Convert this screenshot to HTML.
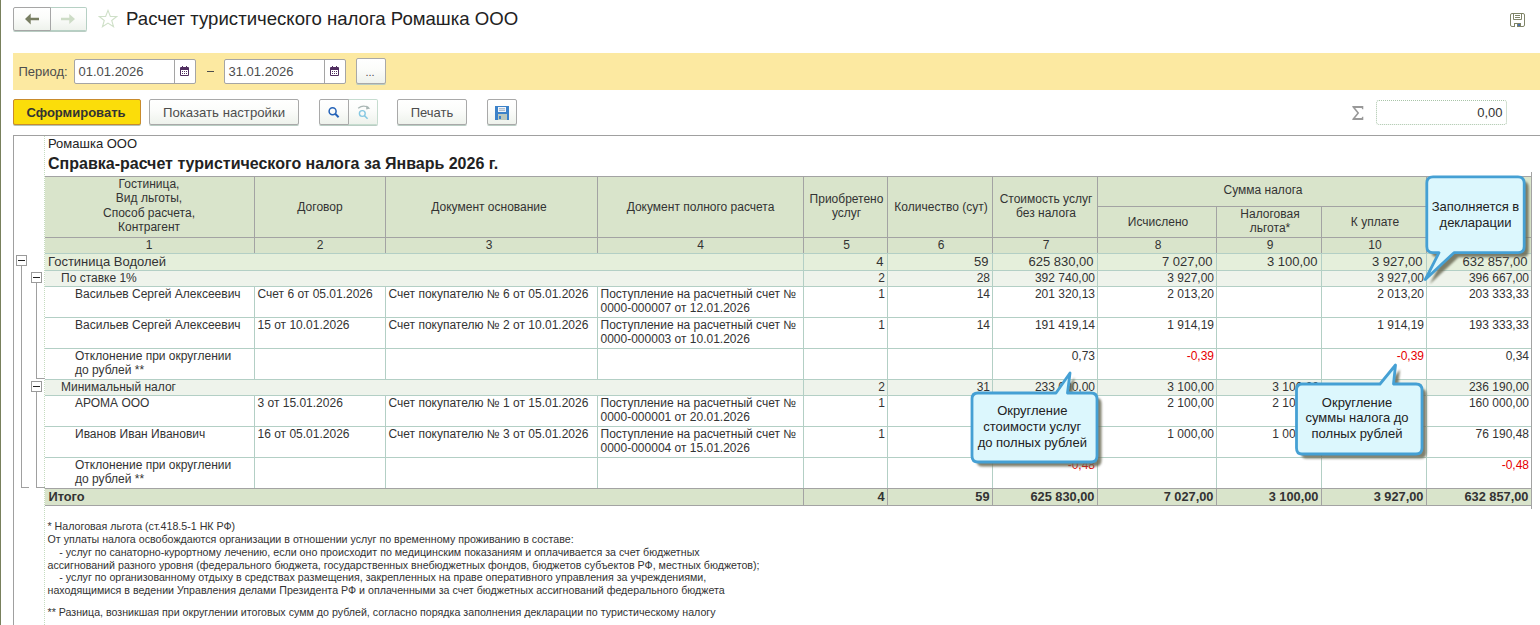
<!DOCTYPE html><html><head><meta charset="utf-8"><style>
html,body{margin:0;padding:0;background:#fff;width:1540px;height:625px;overflow:hidden;position:relative;font-family:"Liberation Sans", sans-serif}
.t{position:absolute;white-space:nowrap;font-family:"Liberation Sans", sans-serif}
.btn{position:absolute;box-sizing:border-box;border:1px solid #a9a9a9;border-radius:2px;background:linear-gradient(#ffffff 0%,#fbfcfa 45%,#eef2ec 100%);box-shadow:0 1px 0 #b9cdc3}
</style></head><body>
<div style="position:absolute;left:0px;top:0px;width:1px;height:625px;background:#78805c"></div>
<div class="btn" style="left:13px;top:7px;width:38px;height:24px;border-color:#a6a6a6;border-radius:2px 0 0 2px"></div>
<div class="btn" style="left:50px;top:7px;width:37px;height:24px;border-color:#b6d0c4;border-left-color:#a6a6a6;border-radius:0 2px 2px 0"></div>
<svg style="position:absolute;left:24px;top:13.4px" width="16" height="12" viewBox="0 0 16 12"><path d="M1 6 L6.7 0.6 L6.7 4.7 L15 4.7 L15 7.3 L6.7 7.3 L6.7 11.4 Z" fill="#787e62"/></svg>
<svg style="position:absolute;left:60px;top:13.4px" width="16" height="12" viewBox="0 0 16 12"><path d="M15 6 L9.3 0.9 L9.3 4.7 L1 4.7 L1 7.3 L9.3 7.3 L9.3 11.1 Z" fill="#cddcc6"/></svg>
<svg style="position:absolute;left:98px;top:9px" width="20" height="20" viewBox="0 0 22 22"><path d="M11 1.5 L13.6 8.1 L20.6 8.3 L15.1 12.6 L17.1 19.5 L11 15.5 L4.9 19.5 L6.9 12.6 L1.4 8.3 L8.4 8.1 Z" fill="none" stroke="#cfe0c8" stroke-width="1.2"/></svg>
<div class="t" style="left:126px;top:7.76px;font-size:18.6px;line-height:22px;font-weight:400;color:#222;">Расчет туристического налога Ромашка ООО</div>
<svg style="position:absolute;left:1510px;top:13px" width="15" height="14" viewBox="0 0 15 14"><rect x="0.5" y="0.5" width="14" height="13" rx="1.5" fill="none" stroke="#7f8468" stroke-width="1"/><path d="M3.5 0.5 V6.5 H11.5 V0.5" fill="none" stroke="#7f8468"/><path d="M5 2.5 H10 M5 4.5 H10" stroke="#7f8468"/><rect x="4" y="10" width="7" height="4" fill="#7f8468"/><rect x="5" y="11" width="2" height="3" fill="#fff"/><rect x="8" y="11" width="2" height="2" fill="#4a6fb0"/></svg>
<div style="position:absolute;left:13px;top:53px;width:1527px;height:37px;background:#fce9a1"></div>
<div class="t" style="left:18.5px;top:63.50px;font-size:13px;line-height:16px;font-weight:400;color:#4d4d4d;">Период:</div>
<div style="position:absolute;left:74px;top:59px;width:122px;height:25px;box-sizing:border-box;border:1px solid #a5a5a5;border-radius:2px;background:#fff"></div>
<div style="position:absolute;left:174px;top:60px;width:1px;height:23px;background:#a5a5a5"></div>
<div class="t" style="left:78.5px;top:63.50px;font-size:13px;line-height:16px;font-weight:400;color:#4d4d4d;">01.01.2026</div>
<svg style="position:absolute;left:180px;top:66px" width="9" height="10" viewBox="0 0 9 10"><rect x="0" y="1" width="9" height="9" rx="1" fill="#512e60"/><rect x="1" y="4" width="7" height="5" fill="#fff"/><rect x="2" y="0" width="1" height="2" fill="#512e60"/><rect x="6" y="0" width="1" height="2" fill="#512e60"/><g fill="#512e60"><rect x="2" y="5" width="1" height="1"/><rect x="4" y="5" width="1" height="1"/><rect x="6" y="5" width="1" height="1"/><rect x="2" y="7" width="1" height="1"/><rect x="4" y="7" width="1" height="1"/><rect x="6" y="7" width="1" height="1"/></g></svg>
<div style="position:absolute;left:207px;top:71px;width:7px;height:1px;background:#4d4d4d"></div>
<div style="position:absolute;left:224px;top:59px;width:122px;height:25px;box-sizing:border-box;border:1px solid #a5a5a5;border-radius:2px;background:#fff"></div>
<div style="position:absolute;left:324px;top:60px;width:1px;height:23px;background:#a5a5a5"></div>
<div class="t" style="left:228.5px;top:63.50px;font-size:13px;line-height:16px;font-weight:400;color:#4d4d4d;">31.01.2026</div>
<svg style="position:absolute;left:330px;top:66px" width="9" height="10" viewBox="0 0 9 10"><rect x="0" y="1" width="9" height="9" rx="1" fill="#512e60"/><rect x="1" y="4" width="7" height="5" fill="#fff"/><rect x="2" y="0" width="1" height="2" fill="#512e60"/><rect x="6" y="0" width="1" height="2" fill="#512e60"/><g fill="#512e60"><rect x="2" y="5" width="1" height="1"/><rect x="4" y="5" width="1" height="1"/><rect x="6" y="5" width="1" height="1"/><rect x="2" y="7" width="1" height="1"/><rect x="4" y="7" width="1" height="1"/><rect x="6" y="7" width="1" height="1"/></g></svg>
<div class="btn" style="left:356px;top:58px;width:30px;height:26px"></div>
<div class="t" style="left:170px;width:400px;text-align:center;top:65.69px;font-size:11px;line-height:13px;font-weight:400;color:#4d4d4d;">...</div>
<div style="position:absolute;left:13px;top:99px;width:128px;height:26px;box-sizing:border-box;border:1px solid #c98b2c;border-radius:2px;background:#fbdd0a;box-shadow:0 1px 0 #b3c5b7"></div>
<div class="t" style="left:-124px;width:400px;text-align:center;top:105.00px;font-size:13px;line-height:16px;font-weight:700;color:#333;">Сформировать</div>
<div class="btn" style="left:149px;top:99px;width:150px;height:26px"></div>
<div class="t" style="left:24px;width:400px;text-align:center;top:105.23px;font-size:13.2px;line-height:16px;font-weight:400;color:#4d4d4d;">Показать настройки</div>
<div class="btn" style="left:319px;top:99px;width:30px;height:26px;border-radius:2px 0 0 2px"></div>
<div class="btn" style="left:348px;top:99px;width:30px;height:26px;border-color:#c6dccf;border-left-color:#a9a9a9;border-radius:0 2px 2px 0"></div>
<svg style="position:absolute;left:325px;top:103px" width="16" height="18" viewBox="0 0 16 18"><circle cx="7.6" cy="8.2" r="3.5" fill="none" stroke="#2563b8" stroke-width="1.5"/><line x1="10.2" y1="10.8" x2="13.6" y2="14.2" stroke="#2563b8" stroke-width="2"/></svg>
<svg style="position:absolute;left:355px;top:102px" width="18" height="18" viewBox="0 0 18 18"><circle cx="7.3" cy="11.5" r="2.9" fill="none" stroke="#86c8e2" stroke-width="1.4"/><line x1="9.5" y1="13.7" x2="12.6" y2="16.8" stroke="#86c8e2" stroke-width="1.6"/><path d="M3.2 6.3 Q8 2.4 13.6 5.6" fill="none" stroke="#a9b6b4" stroke-width="1.3"/><path d="M11.3 3.6 L15.2 6.6 L11.2 7.4 Z" fill="#a9b6b4"/></svg>
<div class="btn" style="left:397px;top:99px;width:70px;height:26px"></div>
<div class="t" style="left:232px;width:400px;text-align:center;top:105.30px;font-size:13px;line-height:16px;font-weight:400;color:#4d4d4d;">Печать</div>
<div class="btn" style="left:487px;top:99px;width:30px;height:26px"></div>
<svg style="position:absolute;left:495px;top:106px" width="14" height="14" viewBox="0 0 14 14"><rect x="0" y="0" width="14" height="14" fill="#3b82c9"/><rect x="3" y="1" width="8" height="5" fill="#f2f6fa"/><line x1="4" y1="2.7" x2="10" y2="2.7" stroke="#8aa0b8" stroke-width="0.8"/><line x1="4" y1="4.3" x2="10" y2="4.3" stroke="#8aa0b8" stroke-width="0.8"/><rect x="3" y="8" width="9" height="6" fill="#b9c7bd"/><rect x="4" y="10" width="2" height="3" fill="#3b82c9"/></svg>
<svg style="position:absolute;left:1352px;top:106px" width="12" height="14" viewBox="0 0 12 14"><path d="M0.3 0 H11.3 V3.2 H10.3 L9.6 1.9 H3.2 L7.2 7 L3.2 12.1 H9.6 L10.3 10.8 H11.3 V14 H0.3 V12.9 L5.2 7 L0.3 1.1 Z" fill="#999"/></svg>
<div style="position:absolute;left:1376px;top:100px;width:131px;height:25px;box-sizing:border-box;border:1px dotted #a8c4a8;border-radius:3px;background:#fff"></div>
<div class="t" style="right:37.5px;top:104.80px;font-size:13px;line-height:16px;font-weight:400;color:#333;text-align:right;">0,00</div>
<div style="position:absolute;left:13px;top:135px;width:1527px;height:1px;background:#a0a0a0"></div>
<div style="position:absolute;left:13px;top:135px;width:1px;height:490px;background:#a0a0a0"></div>
<div style="position:absolute;left:44px;top:136px;width:0;height:489px;border-left:1px dotted #c5dcc0"></div>
<div class="t" style="left:48px;top:135.50px;font-size:13px;line-height:16px;font-weight:400;color:#222;">Ромашка ООО</div>
<div class="t" style="left:48px;top:153.56px;font-size:16px;line-height:19px;font-weight:700;color:#222;">Справка-расчет туристического налога за Январь 2026 г.</div>
<div style="position:absolute;left:45px;top:176px;width:1486px;height:77px;background:#d9e4cb"></div>
<div style="position:absolute;left:45px;top:176px;width:1487px;height:1px;background:#a3a3a3"></div>
<div style="position:absolute;left:1097px;top:206px;width:330px;height:1px;background:#a3a3a3"></div>
<div style="position:absolute;left:45px;top:237px;width:1487px;height:1px;background:#a3a3a3"></div>
<div style="position:absolute;left:254px;top:176px;width:1px;height:78px;background:#a3a3a3"></div>
<div style="position:absolute;left:385px;top:176px;width:1px;height:78px;background:#a3a3a3"></div>
<div style="position:absolute;left:597px;top:176px;width:1px;height:78px;background:#a3a3a3"></div>
<div style="position:absolute;left:803px;top:176px;width:1px;height:78px;background:#a3a3a3"></div>
<div style="position:absolute;left:887px;top:176px;width:1px;height:78px;background:#a3a3a3"></div>
<div style="position:absolute;left:992px;top:176px;width:1px;height:78px;background:#a3a3a3"></div>
<div style="position:absolute;left:1097px;top:176px;width:1px;height:78px;background:#a3a3a3"></div>
<div style="position:absolute;left:1216px;top:206px;width:1px;height:48px;background:#a3a3a3"></div>
<div style="position:absolute;left:1321px;top:206px;width:1px;height:48px;background:#a3a3a3"></div>
<div style="position:absolute;left:1426px;top:176px;width:1px;height:78px;background:#a3a3a3"></div>
<div style="position:absolute;left:1531px;top:176px;width:1px;height:78px;background:#a3a3a3"></div>
<div style="position:absolute;left:1531px;top:172px;width:1px;height:337px;background:#a3a3a3"></div>
<div class="t" style="left:-51.0px;width:400px;text-align:center;top:176.54px;font-size:12px;line-height:14px;font-weight:400;color:#333;">Гостиница,</div>
<div class="t" style="left:-51.0px;width:400px;text-align:center;top:191.09px;font-size:12px;line-height:14px;font-weight:400;color:#333;">Вид льготы,</div>
<div class="t" style="left:-51.0px;width:400px;text-align:center;top:205.64px;font-size:12px;line-height:14px;font-weight:400;color:#333;">Способ расчета,</div>
<div class="t" style="left:-51.0px;width:400px;text-align:center;top:220.19px;font-size:12px;line-height:14px;font-weight:400;color:#333;">Контрагент</div>
<div class="t" style="left:120.0px;width:400px;text-align:center;top:200.34px;font-size:12px;line-height:14px;font-weight:400;color:#333;">Договор</div>
<div class="t" style="left:289.0px;width:400px;text-align:center;top:200.34px;font-size:12px;line-height:14px;font-weight:400;color:#333;">Документ основание</div>
<div class="t" style="left:500.5px;width:400px;text-align:center;top:200.34px;font-size:12px;line-height:14px;font-weight:400;color:#333;">Документ полного расчета</div>
<div class="t" style="left:646.5px;width:400px;text-align:center;top:192.34px;font-size:12px;line-height:14px;font-weight:400;color:#333;">Приобретено</div>
<div class="t" style="left:646.5px;width:400px;text-align:center;top:205.64px;font-size:12px;line-height:14px;font-weight:400;color:#333;">услуг</div>
<div class="t" style="left:741.0px;width:400px;text-align:center;top:200.34px;font-size:12px;line-height:14px;font-weight:400;color:#333;">Количество (сут)</div>
<div class="t" style="left:846.0px;width:400px;text-align:center;top:192.34px;font-size:12px;line-height:14px;font-weight:400;color:#333;">Стоимость услуг</div>
<div class="t" style="left:846.0px;width:400px;text-align:center;top:205.64px;font-size:12px;line-height:14px;font-weight:400;color:#333;">без налога</div>
<div class="t" style="left:1063.0px;width:400px;text-align:center;top:183.44px;font-size:12px;line-height:14px;font-weight:400;color:#333;">Сумма налога</div>
<div class="t" style="left:958.0px;width:400px;text-align:center;top:214.64px;font-size:12px;line-height:14px;font-weight:400;color:#333;">Исчислено</div>
<div class="t" style="left:1070.0px;width:400px;text-align:center;top:207.44px;font-size:12px;line-height:14px;font-weight:400;color:#333;">Налоговая</div>
<div class="t" style="left:1070.0px;width:400px;text-align:center;top:220.74px;font-size:12px;line-height:14px;font-weight:400;color:#333;">льгота*</div>
<div class="t" style="left:1175.0px;width:400px;text-align:center;top:214.64px;font-size:12px;line-height:14px;font-weight:400;color:#333;">К уплате</div>
<div class="t" style="left:-51.0px;width:400px;text-align:center;top:238.14px;font-size:12px;line-height:14px;font-weight:400;color:#333;">1</div>
<div class="t" style="left:120.0px;width:400px;text-align:center;top:238.14px;font-size:12px;line-height:14px;font-weight:400;color:#333;">2</div>
<div class="t" style="left:289.0px;width:400px;text-align:center;top:238.14px;font-size:12px;line-height:14px;font-weight:400;color:#333;">3</div>
<div class="t" style="left:500.5px;width:400px;text-align:center;top:238.14px;font-size:12px;line-height:14px;font-weight:400;color:#333;">4</div>
<div class="t" style="left:646.5px;width:400px;text-align:center;top:238.14px;font-size:12px;line-height:14px;font-weight:400;color:#333;">5</div>
<div class="t" style="left:741.0px;width:400px;text-align:center;top:238.14px;font-size:12px;line-height:14px;font-weight:400;color:#333;">6</div>
<div class="t" style="left:846.0px;width:400px;text-align:center;top:238.14px;font-size:12px;line-height:14px;font-weight:400;color:#333;">7</div>
<div class="t" style="left:958.0px;width:400px;text-align:center;top:238.14px;font-size:12px;line-height:14px;font-weight:400;color:#333;">8</div>
<div class="t" style="left:1070.0px;width:400px;text-align:center;top:238.14px;font-size:12px;line-height:14px;font-weight:400;color:#333;">9</div>
<div class="t" style="left:1175.0px;width:400px;text-align:center;top:238.14px;font-size:12px;line-height:14px;font-weight:400;color:#333;">10</div>
<div class="t" style="left:1280.0px;width:400px;text-align:center;top:238.14px;font-size:12px;line-height:14px;font-weight:400;color:#333;">11</div>
<div style="position:absolute;left:45px;top:254px;width:1486px;height:16px;background:#e5efdb"></div>
<div style="position:absolute;left:803px;top:253px;width:1px;height:18px;background:#b3cfc5"></div>
<div style="position:absolute;left:887px;top:253px;width:1px;height:18px;background:#b3cfc5"></div>
<div style="position:absolute;left:992px;top:253px;width:1px;height:18px;background:#b3cfc5"></div>
<div style="position:absolute;left:1097px;top:253px;width:1px;height:18px;background:#b3cfc5"></div>
<div style="position:absolute;left:1216px;top:253px;width:1px;height:18px;background:#b3cfc5"></div>
<div style="position:absolute;left:1321px;top:253px;width:1px;height:18px;background:#b3cfc5"></div>
<div style="position:absolute;left:1426px;top:253px;width:1px;height:18px;background:#b3cfc5"></div>
<div style="position:absolute;left:45px;top:270px;width:1486px;height:1px;background:#b3cfc5"></div>
<div class="t" style="left:48px;top:253.70px;font-size:13px;line-height:16px;font-weight:400;color:#333;">Гостиница Водолей</div>
<div class="t" style="right:656.5px;top:253.70px;font-size:13px;line-height:16px;font-weight:400;color:#333;text-align:right;">4</div>
<div class="t" style="right:551.5px;top:253.70px;font-size:13px;line-height:16px;font-weight:400;color:#333;text-align:right;">59</div>
<div class="t" style="right:446.5px;top:253.70px;font-size:13px;line-height:16px;font-weight:400;color:#333;text-align:right;">625 830,00</div>
<div class="t" style="right:327.5px;top:253.70px;font-size:13px;line-height:16px;font-weight:400;color:#333;text-align:right;">7 027,00</div>
<div class="t" style="right:222.5px;top:253.70px;font-size:13px;line-height:16px;font-weight:400;color:#333;text-align:right;">3 100,00</div>
<div class="t" style="right:117.5px;top:253.70px;font-size:13px;line-height:16px;font-weight:400;color:#333;text-align:right;">3 927,00</div>
<div class="t" style="right:12.5px;top:253.70px;font-size:13px;line-height:16px;font-weight:400;color:#333;text-align:right;">632 857,00</div>
<div style="position:absolute;left:45px;top:271px;width:1486px;height:15px;background:#eef3eb"></div>
<div style="position:absolute;left:803px;top:270px;width:1px;height:17px;background:#b3cfc5"></div>
<div style="position:absolute;left:887px;top:270px;width:1px;height:17px;background:#b3cfc5"></div>
<div style="position:absolute;left:992px;top:270px;width:1px;height:17px;background:#b3cfc5"></div>
<div style="position:absolute;left:1097px;top:270px;width:1px;height:17px;background:#b3cfc5"></div>
<div style="position:absolute;left:1216px;top:270px;width:1px;height:17px;background:#b3cfc5"></div>
<div style="position:absolute;left:1321px;top:270px;width:1px;height:17px;background:#b3cfc5"></div>
<div style="position:absolute;left:1426px;top:270px;width:1px;height:17px;background:#b3cfc5"></div>
<div style="position:absolute;left:45px;top:286px;width:1486px;height:1px;background:#b3cfc5"></div>
<div class="t" style="left:61px;top:271.14px;font-size:12px;line-height:14px;font-weight:400;color:#333;">По ставке 1%</div>
<div class="t" style="right:655px;top:271.14px;font-size:12px;line-height:14px;font-weight:400;color:#333;text-align:right;">2</div>
<div class="t" style="right:550px;top:271.14px;font-size:12px;line-height:14px;font-weight:400;color:#333;text-align:right;">28</div>
<div class="t" style="right:445px;top:271.14px;font-size:12px;line-height:14px;font-weight:400;color:#333;text-align:right;">392 740,00</div>
<div class="t" style="right:326px;top:271.14px;font-size:12px;line-height:14px;font-weight:400;color:#333;text-align:right;">3 927,00</div>
<div class="t" style="right:116px;top:271.14px;font-size:12px;line-height:14px;font-weight:400;color:#333;text-align:right;">3 927,00</div>
<div class="t" style="right:11px;top:271.14px;font-size:12px;line-height:14px;font-weight:400;color:#333;text-align:right;">396 667,00</div>
<div style="position:absolute;left:254px;top:286px;width:1px;height:32px;background:#b3cfc5"></div>
<div style="position:absolute;left:385px;top:286px;width:1px;height:32px;background:#b3cfc5"></div>
<div style="position:absolute;left:597px;top:286px;width:1px;height:32px;background:#b3cfc5"></div>
<div style="position:absolute;left:803px;top:286px;width:1px;height:32px;background:#b3cfc5"></div>
<div style="position:absolute;left:887px;top:286px;width:1px;height:32px;background:#b3cfc5"></div>
<div style="position:absolute;left:992px;top:286px;width:1px;height:32px;background:#b3cfc5"></div>
<div style="position:absolute;left:1097px;top:286px;width:1px;height:32px;background:#b3cfc5"></div>
<div style="position:absolute;left:1216px;top:286px;width:1px;height:32px;background:#b3cfc5"></div>
<div style="position:absolute;left:1321px;top:286px;width:1px;height:32px;background:#b3cfc5"></div>
<div style="position:absolute;left:1426px;top:286px;width:1px;height:32px;background:#b3cfc5"></div>
<div style="position:absolute;left:45px;top:317px;width:1486px;height:1px;background:#b3cfc5"></div>
<div class="t" style="left:75px;top:287.14px;font-size:12px;line-height:14px;font-weight:400;color:#333;">Васильев Сергей Алексеевич</div>
<div class="t" style="left:257.5px;top:287.14px;font-size:12px;line-height:14px;font-weight:400;color:#333;">Счет 6 от 05.01.2026</div>
<div class="t" style="left:388.5px;top:287.14px;font-size:12px;line-height:14px;font-weight:400;color:#333;">Счет покупателю № 6 от 05.01.2026</div>
<div class="t" style="left:600.5px;top:287.14px;font-size:12px;line-height:14px;font-weight:400;color:#333;">Поступление на расчетный счет №</div>
<div class="t" style="left:600.5px;top:301.24px;font-size:12px;line-height:14px;font-weight:400;color:#333;">0000-000007 от 12.01.2026</div>
<div class="t" style="right:655px;top:287.14px;font-size:12px;line-height:14px;font-weight:400;color:#333;text-align:right;">1</div>
<div class="t" style="right:550px;top:287.14px;font-size:12px;line-height:14px;font-weight:400;color:#333;text-align:right;">14</div>
<div class="t" style="right:445px;top:287.14px;font-size:12px;line-height:14px;font-weight:400;color:#333;text-align:right;">201 320,13</div>
<div class="t" style="right:326px;top:287.14px;font-size:12px;line-height:14px;font-weight:400;color:#333;text-align:right;">2 013,20</div>
<div class="t" style="right:116px;top:287.14px;font-size:12px;line-height:14px;font-weight:400;color:#333;text-align:right;">2 013,20</div>
<div class="t" style="right:11px;top:287.14px;font-size:12px;line-height:14px;font-weight:400;color:#333;text-align:right;">203 333,33</div>
<div style="position:absolute;left:254px;top:317px;width:1px;height:32px;background:#b3cfc5"></div>
<div style="position:absolute;left:385px;top:317px;width:1px;height:32px;background:#b3cfc5"></div>
<div style="position:absolute;left:597px;top:317px;width:1px;height:32px;background:#b3cfc5"></div>
<div style="position:absolute;left:803px;top:317px;width:1px;height:32px;background:#b3cfc5"></div>
<div style="position:absolute;left:887px;top:317px;width:1px;height:32px;background:#b3cfc5"></div>
<div style="position:absolute;left:992px;top:317px;width:1px;height:32px;background:#b3cfc5"></div>
<div style="position:absolute;left:1097px;top:317px;width:1px;height:32px;background:#b3cfc5"></div>
<div style="position:absolute;left:1216px;top:317px;width:1px;height:32px;background:#b3cfc5"></div>
<div style="position:absolute;left:1321px;top:317px;width:1px;height:32px;background:#b3cfc5"></div>
<div style="position:absolute;left:1426px;top:317px;width:1px;height:32px;background:#b3cfc5"></div>
<div style="position:absolute;left:45px;top:348px;width:1486px;height:1px;background:#b3cfc5"></div>
<div class="t" style="left:75px;top:318.14px;font-size:12px;line-height:14px;font-weight:400;color:#333;">Васильев Сергей Алексеевич</div>
<div class="t" style="left:257.5px;top:318.14px;font-size:12px;line-height:14px;font-weight:400;color:#333;">15 от 10.01.2026</div>
<div class="t" style="left:388.5px;top:318.14px;font-size:12px;line-height:14px;font-weight:400;color:#333;">Счет покупателю № 2 от 10.01.2026</div>
<div class="t" style="left:600.5px;top:318.14px;font-size:12px;line-height:14px;font-weight:400;color:#333;">Поступление на расчетный счет №</div>
<div class="t" style="left:600.5px;top:332.24px;font-size:12px;line-height:14px;font-weight:400;color:#333;">0000-000003 от 10.01.2026</div>
<div class="t" style="right:655px;top:318.14px;font-size:12px;line-height:14px;font-weight:400;color:#333;text-align:right;">1</div>
<div class="t" style="right:550px;top:318.14px;font-size:12px;line-height:14px;font-weight:400;color:#333;text-align:right;">14</div>
<div class="t" style="right:445px;top:318.14px;font-size:12px;line-height:14px;font-weight:400;color:#333;text-align:right;">191 419,14</div>
<div class="t" style="right:326px;top:318.14px;font-size:12px;line-height:14px;font-weight:400;color:#333;text-align:right;">1 914,19</div>
<div class="t" style="right:116px;top:318.14px;font-size:12px;line-height:14px;font-weight:400;color:#333;text-align:right;">1 914,19</div>
<div class="t" style="right:11px;top:318.14px;font-size:12px;line-height:14px;font-weight:400;color:#333;text-align:right;">193 333,33</div>
<div style="position:absolute;left:254px;top:348px;width:1px;height:32px;background:#b3cfc5"></div>
<div style="position:absolute;left:385px;top:348px;width:1px;height:32px;background:#b3cfc5"></div>
<div style="position:absolute;left:597px;top:348px;width:1px;height:32px;background:#b3cfc5"></div>
<div style="position:absolute;left:803px;top:348px;width:1px;height:32px;background:#b3cfc5"></div>
<div style="position:absolute;left:887px;top:348px;width:1px;height:32px;background:#b3cfc5"></div>
<div style="position:absolute;left:992px;top:348px;width:1px;height:32px;background:#b3cfc5"></div>
<div style="position:absolute;left:1097px;top:348px;width:1px;height:32px;background:#b3cfc5"></div>
<div style="position:absolute;left:1216px;top:348px;width:1px;height:32px;background:#b3cfc5"></div>
<div style="position:absolute;left:1321px;top:348px;width:1px;height:32px;background:#b3cfc5"></div>
<div style="position:absolute;left:1426px;top:348px;width:1px;height:32px;background:#b3cfc5"></div>
<div style="position:absolute;left:45px;top:379px;width:1486px;height:1px;background:#b3cfc5"></div>
<div class="t" style="left:75px;top:349.14px;font-size:12px;line-height:14px;font-weight:400;color:#333;">Отклонение при округлении</div>
<div class="t" style="left:75px;top:363.24px;font-size:12px;line-height:14px;font-weight:400;color:#333;">до рублей **</div>
<div class="t" style="right:445px;top:349.14px;font-size:12px;line-height:14px;font-weight:400;color:#333;text-align:right;">0,73</div>
<div class="t" style="right:326px;top:349.14px;font-size:12px;line-height:14px;font-weight:400;color:#e60000;text-align:right;">-0,39</div>
<div class="t" style="right:116px;top:349.14px;font-size:12px;line-height:14px;font-weight:400;color:#e60000;text-align:right;">-0,39</div>
<div class="t" style="right:11px;top:349.14px;font-size:12px;line-height:14px;font-weight:400;color:#333;text-align:right;">0,34</div>
<div style="position:absolute;left:45px;top:380px;width:1486px;height:15px;background:#eef3eb"></div>
<div style="position:absolute;left:803px;top:379px;width:1px;height:17px;background:#b3cfc5"></div>
<div style="position:absolute;left:887px;top:379px;width:1px;height:17px;background:#b3cfc5"></div>
<div style="position:absolute;left:992px;top:379px;width:1px;height:17px;background:#b3cfc5"></div>
<div style="position:absolute;left:1097px;top:379px;width:1px;height:17px;background:#b3cfc5"></div>
<div style="position:absolute;left:1216px;top:379px;width:1px;height:17px;background:#b3cfc5"></div>
<div style="position:absolute;left:1321px;top:379px;width:1px;height:17px;background:#b3cfc5"></div>
<div style="position:absolute;left:1426px;top:379px;width:1px;height:17px;background:#b3cfc5"></div>
<div style="position:absolute;left:45px;top:395px;width:1486px;height:1px;background:#b3cfc5"></div>
<div class="t" style="left:61px;top:380.14px;font-size:12px;line-height:14px;font-weight:400;color:#333;">Минимальный налог</div>
<div class="t" style="right:655px;top:380.14px;font-size:12px;line-height:14px;font-weight:400;color:#333;text-align:right;">2</div>
<div class="t" style="right:550px;top:380.14px;font-size:12px;line-height:14px;font-weight:400;color:#333;text-align:right;">31</div>
<div class="t" style="right:445px;top:380.14px;font-size:12px;line-height:14px;font-weight:400;color:#333;text-align:right;">233 090,00</div>
<div class="t" style="right:326px;top:380.14px;font-size:12px;line-height:14px;font-weight:400;color:#333;text-align:right;">3 100,00</div>
<div class="t" style="right:221px;top:380.14px;font-size:12px;line-height:14px;font-weight:400;color:#333;text-align:right;">3 100,00</div>
<div class="t" style="right:11px;top:380.14px;font-size:12px;line-height:14px;font-weight:400;color:#333;text-align:right;">236 190,00</div>
<div style="position:absolute;left:254px;top:395px;width:1px;height:32px;background:#b3cfc5"></div>
<div style="position:absolute;left:385px;top:395px;width:1px;height:32px;background:#b3cfc5"></div>
<div style="position:absolute;left:597px;top:395px;width:1px;height:32px;background:#b3cfc5"></div>
<div style="position:absolute;left:803px;top:395px;width:1px;height:32px;background:#b3cfc5"></div>
<div style="position:absolute;left:887px;top:395px;width:1px;height:32px;background:#b3cfc5"></div>
<div style="position:absolute;left:992px;top:395px;width:1px;height:32px;background:#b3cfc5"></div>
<div style="position:absolute;left:1097px;top:395px;width:1px;height:32px;background:#b3cfc5"></div>
<div style="position:absolute;left:1216px;top:395px;width:1px;height:32px;background:#b3cfc5"></div>
<div style="position:absolute;left:1321px;top:395px;width:1px;height:32px;background:#b3cfc5"></div>
<div style="position:absolute;left:1426px;top:395px;width:1px;height:32px;background:#b3cfc5"></div>
<div style="position:absolute;left:45px;top:426px;width:1486px;height:1px;background:#b3cfc5"></div>
<div class="t" style="left:75px;top:396.14px;font-size:12px;line-height:14px;font-weight:400;color:#333;">АРОМА ООО</div>
<div class="t" style="left:257.5px;top:396.14px;font-size:12px;line-height:14px;font-weight:400;color:#333;">3 от 15.01.2026</div>
<div class="t" style="left:388.5px;top:396.14px;font-size:12px;line-height:14px;font-weight:400;color:#333;">Счет покупателю № 1 от 15.01.2026</div>
<div class="t" style="left:600.5px;top:396.14px;font-size:12px;line-height:14px;font-weight:400;color:#333;">Поступление на расчетный счет №</div>
<div class="t" style="left:600.5px;top:410.24px;font-size:12px;line-height:14px;font-weight:400;color:#333;">0000-000001 от 20.01.2026</div>
<div class="t" style="right:655px;top:396.14px;font-size:12px;line-height:14px;font-weight:400;color:#333;text-align:right;">1</div>
<div class="t" style="right:550px;top:396.14px;font-size:12px;line-height:14px;font-weight:400;color:#333;text-align:right;">23</div>
<div class="t" style="right:445px;top:396.14px;font-size:12px;line-height:14px;font-weight:400;color:#333;text-align:right;">157 900,00</div>
<div class="t" style="right:326px;top:396.14px;font-size:12px;line-height:14px;font-weight:400;color:#333;text-align:right;">2 100,00</div>
<div class="t" style="right:221px;top:396.14px;font-size:12px;line-height:14px;font-weight:400;color:#333;text-align:right;">2 100,00</div>
<div class="t" style="right:11px;top:396.14px;font-size:12px;line-height:14px;font-weight:400;color:#333;text-align:right;">160 000,00</div>
<div style="position:absolute;left:254px;top:426px;width:1px;height:32px;background:#b3cfc5"></div>
<div style="position:absolute;left:385px;top:426px;width:1px;height:32px;background:#b3cfc5"></div>
<div style="position:absolute;left:597px;top:426px;width:1px;height:32px;background:#b3cfc5"></div>
<div style="position:absolute;left:803px;top:426px;width:1px;height:32px;background:#b3cfc5"></div>
<div style="position:absolute;left:887px;top:426px;width:1px;height:32px;background:#b3cfc5"></div>
<div style="position:absolute;left:992px;top:426px;width:1px;height:32px;background:#b3cfc5"></div>
<div style="position:absolute;left:1097px;top:426px;width:1px;height:32px;background:#b3cfc5"></div>
<div style="position:absolute;left:1216px;top:426px;width:1px;height:32px;background:#b3cfc5"></div>
<div style="position:absolute;left:1321px;top:426px;width:1px;height:32px;background:#b3cfc5"></div>
<div style="position:absolute;left:1426px;top:426px;width:1px;height:32px;background:#b3cfc5"></div>
<div style="position:absolute;left:45px;top:457px;width:1486px;height:1px;background:#b3cfc5"></div>
<div class="t" style="left:75px;top:427.14px;font-size:12px;line-height:14px;font-weight:400;color:#333;">Иванов Иван Иванович</div>
<div class="t" style="left:257.5px;top:427.14px;font-size:12px;line-height:14px;font-weight:400;color:#333;">16 от 05.01.2026</div>
<div class="t" style="left:388.5px;top:427.14px;font-size:12px;line-height:14px;font-weight:400;color:#333;">Счет покупателю № 3 от 05.01.2026</div>
<div class="t" style="left:600.5px;top:427.14px;font-size:12px;line-height:14px;font-weight:400;color:#333;">Поступление на расчетный счет №</div>
<div class="t" style="left:600.5px;top:441.24px;font-size:12px;line-height:14px;font-weight:400;color:#333;">0000-000004 от 15.01.2026</div>
<div class="t" style="right:655px;top:427.14px;font-size:12px;line-height:14px;font-weight:400;color:#333;text-align:right;">1</div>
<div class="t" style="right:550px;top:427.14px;font-size:12px;line-height:14px;font-weight:400;color:#333;text-align:right;">8</div>
<div class="t" style="right:445px;top:427.14px;font-size:12px;line-height:14px;font-weight:400;color:#333;text-align:right;">75 190,48</div>
<div class="t" style="right:326px;top:427.14px;font-size:12px;line-height:14px;font-weight:400;color:#333;text-align:right;">1 000,00</div>
<div class="t" style="right:221px;top:427.14px;font-size:12px;line-height:14px;font-weight:400;color:#333;text-align:right;">1 000,00</div>
<div class="t" style="right:11px;top:427.14px;font-size:12px;line-height:14px;font-weight:400;color:#333;text-align:right;">76 190,48</div>
<div style="position:absolute;left:254px;top:457px;width:1px;height:32px;background:#b3cfc5"></div>
<div style="position:absolute;left:385px;top:457px;width:1px;height:32px;background:#b3cfc5"></div>
<div style="position:absolute;left:597px;top:457px;width:1px;height:32px;background:#b3cfc5"></div>
<div style="position:absolute;left:803px;top:457px;width:1px;height:32px;background:#b3cfc5"></div>
<div style="position:absolute;left:887px;top:457px;width:1px;height:32px;background:#b3cfc5"></div>
<div style="position:absolute;left:992px;top:457px;width:1px;height:32px;background:#b3cfc5"></div>
<div style="position:absolute;left:1097px;top:457px;width:1px;height:32px;background:#b3cfc5"></div>
<div style="position:absolute;left:1216px;top:457px;width:1px;height:32px;background:#b3cfc5"></div>
<div style="position:absolute;left:1321px;top:457px;width:1px;height:32px;background:#b3cfc5"></div>
<div style="position:absolute;left:1426px;top:457px;width:1px;height:32px;background:#b3cfc5"></div>
<div style="position:absolute;left:45px;top:488px;width:1486px;height:1px;background:#b3cfc5"></div>
<div class="t" style="left:75px;top:458.14px;font-size:12px;line-height:14px;font-weight:400;color:#333;">Отклонение при округлении</div>
<div class="t" style="left:75px;top:472.24px;font-size:12px;line-height:14px;font-weight:400;color:#333;">до рублей **</div>
<div class="t" style="right:445px;top:458.14px;font-size:12px;line-height:14px;font-weight:400;color:#e60000;text-align:right;">-0,48</div>
<div class="t" style="right:11px;top:458.14px;font-size:12px;line-height:14px;font-weight:400;color:#e60000;text-align:right;">-0,48</div>
<div style="position:absolute;left:45px;top:253px;width:1486px;height:1px;background:#b3cfc5"></div>
<div style="position:absolute;left:45px;top:489px;width:1486px;height:16px;background:#d9e4cb"></div>
<div style="position:absolute;left:45px;top:488px;width:1487px;height:1px;background:#a3a3a3"></div>
<div style="position:absolute;left:45px;top:505px;width:1487px;height:1px;background:#a3a3a3"></div>
<div style="position:absolute;left:803px;top:488px;width:1px;height:18px;background:#a3a3a3"></div>
<div style="position:absolute;left:887px;top:488px;width:1px;height:18px;background:#a3a3a3"></div>
<div style="position:absolute;left:992px;top:488px;width:1px;height:18px;background:#a3a3a3"></div>
<div style="position:absolute;left:1097px;top:488px;width:1px;height:18px;background:#a3a3a3"></div>
<div style="position:absolute;left:1216px;top:488px;width:1px;height:18px;background:#a3a3a3"></div>
<div style="position:absolute;left:1321px;top:488px;width:1px;height:18px;background:#a3a3a3"></div>
<div style="position:absolute;left:1426px;top:488px;width:1px;height:18px;background:#a3a3a3"></div>
<div class="t" style="left:48.5px;top:488.86px;font-size:12.8px;line-height:15px;font-weight:700;color:#333;">Итого</div>
<div class="t" style="right:655.5px;top:488.86px;font-size:12.8px;line-height:15px;font-weight:700;color:#333;text-align:right;">4</div>
<div class="t" style="right:550.5px;top:488.86px;font-size:12.8px;line-height:15px;font-weight:700;color:#333;text-align:right;">59</div>
<div class="t" style="right:445.5px;top:488.86px;font-size:12.8px;line-height:15px;font-weight:700;color:#333;text-align:right;">625 830,00</div>
<div class="t" style="right:326.5px;top:488.86px;font-size:12.8px;line-height:15px;font-weight:700;color:#333;text-align:right;">7 027,00</div>
<div class="t" style="right:221.5px;top:488.86px;font-size:12.8px;line-height:15px;font-weight:700;color:#333;text-align:right;">3 100,00</div>
<div class="t" style="right:116.5px;top:488.86px;font-size:12.8px;line-height:15px;font-weight:700;color:#333;text-align:right;">3 927,00</div>
<div class="t" style="right:11.5px;top:488.86px;font-size:12.8px;line-height:15px;font-weight:700;color:#333;text-align:right;">632 857,00</div>
<div style="position:absolute;left:16px;top:255px;width:11px;height:11px;box-sizing:border-box;border:1px solid #9a9a9a;background:#fff"></div>
<div style="position:absolute;left:18px;top:260px;width:7px;height:1px;background:#222"></div>
<div style="position:absolute;left:21px;top:266px;width:1px;height:222px;background:#a0a0a0"></div>
<div style="position:absolute;left:21px;top:487px;width:8px;height:1px;background:#a0a0a0"></div>
<div style="position:absolute;left:31px;top:272px;width:11px;height:11px;box-sizing:border-box;border:1px solid #9a9a9a;background:#fff"></div>
<div style="position:absolute;left:33px;top:277px;width:7px;height:1px;background:#222"></div>
<div style="position:absolute;left:36px;top:283px;width:1px;height:96px;background:#a0a0a0"></div>
<div style="position:absolute;left:36px;top:378px;width:9px;height:1px;background:#a0a0a0"></div>
<div style="position:absolute;left:31px;top:381px;width:11px;height:11px;box-sizing:border-box;border:1px solid #9a9a9a;background:#fff"></div>
<div style="position:absolute;left:33px;top:386px;width:7px;height:1px;background:#222"></div>
<div style="position:absolute;left:36px;top:392px;width:1px;height:96px;background:#a0a0a0"></div>
<div style="position:absolute;left:36px;top:487px;width:9px;height:1px;background:#a0a0a0"></div>
<div class="t" style="left:47.5px;top:520.30px;font-size:10.67px;line-height:13px;font-weight:400;color:#333;">* Налоговая льгота (ст.418.5-1 НК РФ)</div>
<div class="t" style="left:47.5px;top:533.05px;font-size:10.67px;line-height:13px;font-weight:400;color:#333;">От уплаты налога освобождаются организации в отношении услуг по временному проживанию в составе:</div>
<div class="t" style="left:47.5px;top:545.80px;font-size:10.67px;line-height:13px;font-weight:400;color:#333;">&nbsp;&nbsp;&nbsp;&nbsp;- услуг по санаторно-курортному лечению, если оно происходит по медицинским показаниям и оплачивается за счет бюджетных</div>
<div class="t" style="left:47.5px;top:558.55px;font-size:10.67px;line-height:13px;font-weight:400;color:#333;">ассигнований разного уровня (федерального бюджета, государственных внебюджетных фондов, бюджетов субъектов РФ, местных бюджетов);</div>
<div class="t" style="left:47.5px;top:571.30px;font-size:10.67px;line-height:13px;font-weight:400;color:#333;">&nbsp;&nbsp;&nbsp;&nbsp;- услуг по организованному отдыху в средствах размещения, закрепленных на праве оперативного управления за учреждениями,</div>
<div class="t" style="left:47.5px;top:584.05px;font-size:10.67px;line-height:13px;font-weight:400;color:#333;">находящимися в ведении Управления делами Президента РФ и оплаченными за счет бюджетных ассигнований федерального бюджета</div>
<div class="t" style="left:47.5px;top:606.00px;font-size:10.67px;line-height:13px;font-weight:400;color:#333;">** Разница, возникшая при округлении итоговых сумм до рублей, согласно порядка заполнения декларации по туристическому налогу</div>
<svg style="position:absolute;left:0;top:0" width="1540" height="625"><defs><filter id="sh" x="-10%" y="-10%" width="130%" height="130%"><feGaussianBlur stdDeviation="1.3"/></filter></defs>
<path d="M1433 176.8 L1518 176.8 Q1524.2 176.8 1524.2 183 L1524.2 246.5 Q1524.2 252.7 1518 252.7 L1454 252.7 L1425.3 279.5 L1439 252.7 L1433 252.7 Q1426.8 252.7 1426.8 246.5 L1426.8 183 Q1426.8 176.8 1433 176.8 Z" fill="#6a6a55" opacity="0.85" transform="translate(4.5,4.5)" filter="url(#sh)"/>
<path d="M978 393 L1056 393 L1070 373 L1067.5 393 L1091 393 Q1097 393 1097 399 L1097 456 Q1097 462 1091 462 L978 462 Q972 462 972 456 L972 399 Q972 393 978 393 Z" fill="#6a6a55" opacity="0.85" transform="translate(4.5,4.5)" filter="url(#sh)"/>
<path d="M1302 384 L1380 384 L1395.5 365 L1393.5 384 L1416 384 Q1422 384 1422 390 L1422 448 Q1422 454 1416 454 L1302 454 Q1296.5 454 1296.5 448 L1296.5 390 Q1296.5 384 1302 384 Z" fill="#6a6a55" opacity="0.85" transform="translate(4.5,4.5)" filter="url(#sh)"/>
<path d="M1433 176.8 L1518 176.8 Q1524.2 176.8 1524.2 183 L1524.2 246.5 Q1524.2 252.7 1518 252.7 L1454 252.7 L1425.3 279.5 L1439 252.7 L1433 252.7 Q1426.8 252.7 1426.8 246.5 L1426.8 183 Q1426.8 176.8 1433 176.8 Z" fill="#dcf7fd" stroke="#45a0d4" stroke-width="2.8" stroke-linejoin="round"/>
<path d="M978 393 L1056 393 L1070 373 L1067.5 393 L1091 393 Q1097 393 1097 399 L1097 456 Q1097 462 1091 462 L978 462 Q972 462 972 456 L972 399 Q972 393 978 393 Z" fill="#dcf7fd" stroke="#45a0d4" stroke-width="2.8" stroke-linejoin="round"/>
<path d="M1302 384 L1380 384 L1395.5 365 L1393.5 384 L1416 384 Q1422 384 1422 390 L1422 448 Q1422 454 1416 454 L1302 454 Q1296.5 454 1296.5 448 L1296.5 390 Q1296.5 384 1302 384 Z" fill="#dcf7fd" stroke="#45a0d4" stroke-width="2.8" stroke-linejoin="round"/>
</svg>
<div class="t" style="left:1275.5px;width:400px;text-align:center;top:198.50px;font-size:13px;line-height:16px;font-weight:400;color:#222;">Заполняется в</div>
<div class="t" style="left:1275.5px;width:400px;text-align:center;top:215.00px;font-size:13px;line-height:16px;font-weight:400;color:#222;">декларации</div>
<div class="t" style="left:832.3px;width:400px;text-align:center;top:402.80px;font-size:13px;line-height:16px;font-weight:400;color:#222;">Округление</div>
<div class="t" style="left:832.3px;width:400px;text-align:center;top:418.80px;font-size:13px;line-height:16px;font-weight:400;color:#222;">стоимости услуг</div>
<div class="t" style="left:832.3px;width:400px;text-align:center;top:434.80px;font-size:13px;line-height:16px;font-weight:400;color:#222;">до полных рублей</div>
<div class="t" style="left:1157px;width:400px;text-align:center;top:394.70px;font-size:13px;line-height:16px;font-weight:400;color:#222;">Округление</div>
<div class="t" style="left:1157px;width:400px;text-align:center;top:410.30px;font-size:13px;line-height:16px;font-weight:400;color:#222;">суммы налога до</div>
<div class="t" style="left:1157px;width:400px;text-align:center;top:425.90px;font-size:13px;line-height:16px;font-weight:400;color:#222;">полных рублей</div>
</body></html>
